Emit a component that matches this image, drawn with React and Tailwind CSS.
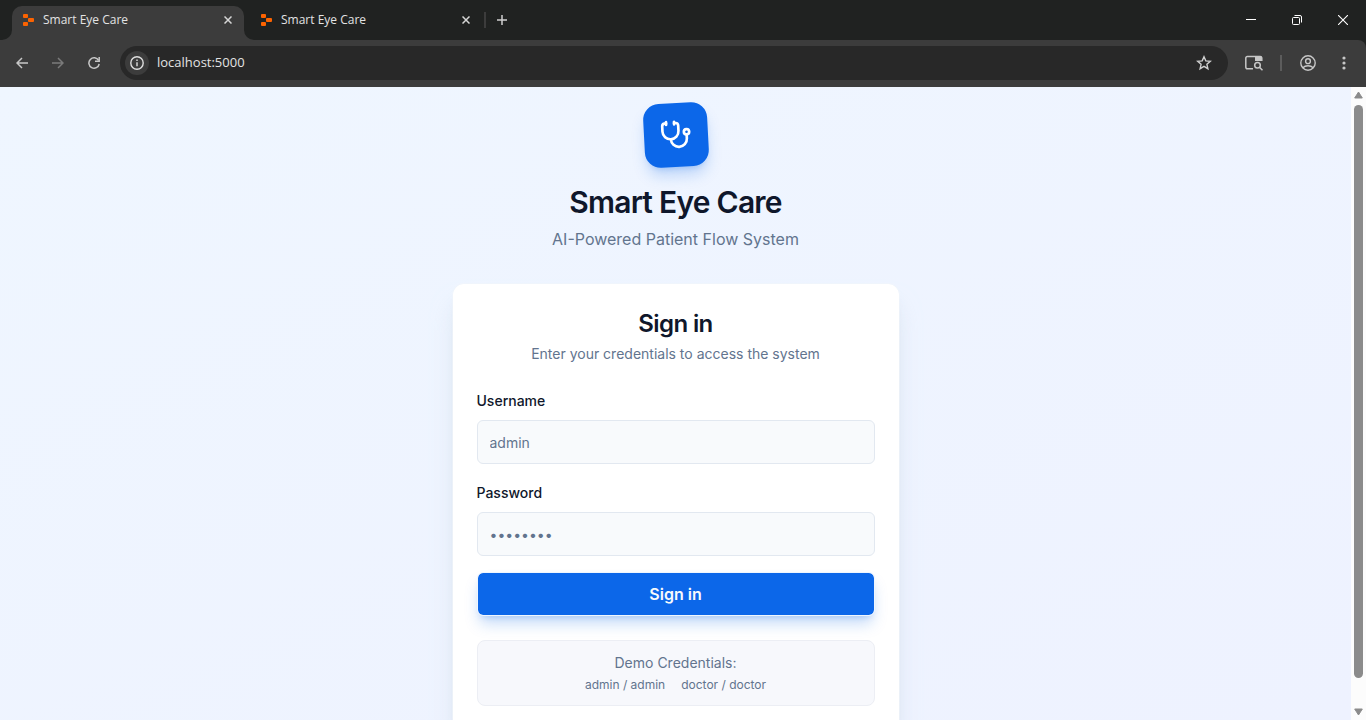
import { useState } from 'react'
import { Stethoscope } from 'lucide-react'
import clsx from 'clsx'

const TABS = [
  { id: 'login', title: 'Smart Eye Care' },
  { id: 'second', title: 'Smart Eye Care' },
]

const DEMO_ACCOUNTS = ['admin / admin', 'doctor / doctor']

const LABEL_CLASS = 'mb-[6px] block text-sm leading-[26px] font-medium text-slate-900'

const INPUT_CLASS =
  'h-11 w-full rounded-md border border-slate-200 bg-slate-50 px-3 text-sm text-slate-900 placeholder:text-slate-500 focus:outline-none'

const TOOL_BUTTON = 'flex h-9 w-9 shrink-0 items-center justify-center text-[#c7c7c7]'

function Favicon() {
  return (
    <svg viewBox="0 0 12 12" className="h-3 w-3 shrink-0" fill="#fc6301">
      <rect x="0" y="0" width="5" height="4" rx="1" />
      <rect x="5" y="4" width="6" height="4" rx="1" />
      <rect x="0" y="8" width="5" height="4" rx="1" />
    </svg>
  )
}

function CloseIcon() {
  return (
    <svg viewBox="0 0 8 8" className="h-2 w-2" fill="none" stroke="#d6d6d6" strokeWidth="1.5">
      <path d="M.5.5l7 7M7.5.5l-7 7" />
    </svg>
  )
}

function BrowserTab({ title, active, onSelect }) {
  return (
    <div
      className={clsx(
        'relative flex h-[34px] w-[232px] items-center rounded-t-[10px] pr-2 pb-[6px] pl-[11px]',
        active && 'bg-[#3c3c3c]',
      )}
    >
      {active && (
        <>
          <svg viewBox="0 0 10 10" className="absolute bottom-0 -left-[10px] h-[10px] w-[10px]" fill="#3c3c3c">
            <path d="M10 0v10H0A10 10 0 0 0 10 0z" />
          </svg>
          <svg viewBox="0 0 10 10" className="absolute -right-[10px] bottom-0 h-[10px] w-[10px]" fill="#3c3c3c">
            <path d="M0 0v10h10A10 10 0 0 1 0 0z" />
          </svg>
        </>
      )}
      <button
        type="button"
        onClick={onSelect}
        className="flex flex-1 items-center gap-2 text-left text-xs text-[#e3e3e3]"
      >
        <Favicon />
        {title}
      </button>
      <button type="button" aria-label="Close tab" className="flex h-4 w-4 items-center justify-center">
        <CloseIcon />
      </button>
    </div>
  )
}

function TabStrip() {
  const [current, setCurrent] = useState('login')

  return (
    <div className="flex h-10 items-end bg-[#202221] pl-3">
      <div className="flex gap-[6px]">
        {TABS.map((tab) => (
          <BrowserTab
            key={tab.id}
            title={tab.title}
            active={tab.id === current}
            onSelect={() => setCurrent(tab.id)}
          />
        ))}
      </div>
      <div className="flex h-10 items-center pl-[2px]">
        <span className="h-4 w-[2px] bg-[#3c3c3c]" />
        <button type="button" aria-label="New tab" className="ml-1 flex h-6 w-6 items-center justify-center">
          <svg viewBox="0 0 10 10" className="h-[10px] w-[10px]" stroke="#cfcfcf" strokeWidth="1.5">
            <path d="M5 0v10M0 5h10" />
          </svg>
        </button>
      </div>
      <div className="ml-auto flex h-10">
        <button type="button" aria-label="Minimize" className="flex w-[46px] items-center justify-center">
          <svg viewBox="0 0 10 10" className="h-[10px] w-[10px]" stroke="#fff">
            <path d="M0 4.5h10" />
          </svg>
        </button>
        <button type="button" aria-label="Restore" className="flex w-[46px] items-center justify-center">
          <svg viewBox="0 0 10 10" className="h-[10px] w-[10px]" fill="none" stroke="#fff">
            <rect x=".5" y="2.5" width="7" height="7" rx="1" />
            <path d="M2.5.5H8A1.5 1.5 0 0 1 9.5 2v5.5" />
          </svg>
        </button>
        <button type="button" aria-label="Close" className="flex w-[46px] items-center justify-center">
          <svg viewBox="0 0 10 10" className="h-[10px] w-[10px]" stroke="#fff" strokeWidth="1.1">
            <path d="M0 0l10 10M10 0L0 10" />
          </svg>
        </button>
      </div>
    </div>
  )
}

function Toolbar() {
  return (
    <div className="bg-[#202221]">
      <div className="flex h-[47px] items-center rounded-tr-lg bg-[#3c3c3c] px-1 pb-px">
        <button type="button" aria-label="Back" className={TOOL_BUTTON}>
          <svg viewBox="0 0 12 12" className="h-3 w-3" fill="none" stroke="currentColor" strokeWidth="1.5">
            <path d="M12 6H1M6 1L1 6l5 5" />
          </svg>
        </button>
        <button type="button" aria-label="Forward" className={clsx(TOOL_BUTTON, 'opacity-45')}>
          <svg viewBox="0 0 12 12" className="h-3 w-3" fill="none" stroke="currentColor" strokeWidth="1.5">
            <path d="M0 6h11M6 1l5 5-5 5" />
          </svg>
        </button>
        <button type="button" aria-label="Reload" className={TOOL_BUTTON}>
          <svg viewBox="0 0 12 12" className="h-3 w-3" fill="none" stroke="currentColor" strokeWidth="1.5">
            <path d="M10.6 3.4A5.2 5.2 0 1 0 11.2 7" />
            <path d="M11.2 0v4.3H7" />
          </svg>
        </button>

        <div className="ml-2 flex h-[34px] flex-1 items-center rounded-full bg-[#282828] pr-3 pl-[5px]">
          <button
            type="button"
            aria-label="Site information"
            className="flex h-6 w-6 items-center justify-center rounded-full bg-[#3c3c3c] text-[#dedede]"
          >
            <svg viewBox="0 0 14 14" className="h-[14px] w-[14px]" fill="none" stroke="currentColor" strokeWidth="1.4">
              <circle cx="7" cy="7" r="6.2" />
              <path d="M7 6.2v4M7 3.6v1.5" />
            </svg>
          </button>
          <input
            aria-label="Address"
            defaultValue="localhost:5000"
            className="ml-2 flex-1 bg-transparent text-[13px] text-[#e3e3e3] focus:outline-none"
          />
          <button type="button" aria-label="Bookmark" className="flex h-6 w-6 items-center justify-center text-[#d0d0d0]">
            <svg viewBox="0 0 16 16" className="h-4 w-4" fill="none" stroke="currentColor" strokeWidth="1.4">
              <path d="M8 1.8l1.8 4.1 4.5.4-3.4 3 1 4.4L8 11.4l-3.9 2.3 1-4.4-3.4-3 4.5-.4z" />
            </svg>
          </button>
        </div>

        <button type="button" aria-label="Search side panel" className={clsx(TOOL_BUTTON, 'ml-2')}>
          <svg viewBox="0 0 18 16" className="h-4 w-[18px]" fill="none" stroke="currentColor" strokeWidth="1.5">
            <path d="M8 13.8H2.3A1.5 1.5 0 0 1 .8 12.3V3a1.5 1.5 0 0 1 1.5-1.5h13A1.5 1.5 0 0 1 16.8 3v3" />
            <path d="M10 1.5h6.8V6H10z" fill="currentColor" stroke="none" />
            <circle cx="12.5" cy="10.3" r="2.8" />
            <path d="M14.5 12.3l3 3" />
          </svg>
        </button>
        <div className="flex w-[18px] justify-center">
          <span className="h-4 w-[2px] bg-[#5c5c5c]" />
        </div>
        <button type="button" aria-label="Profile" className={TOOL_BUTTON}>
          <svg viewBox="0 0 16 16" className="h-4 w-4" fill="none" stroke="currentColor" strokeWidth="1.4">
            <circle cx="8" cy="8" r="7.2" />
            <circle cx="8" cy="6.2" r="2.4" />
            <path d="M2.9 12.8C4.2 11.4 6 10.8 8 10.8s3.8.6 5.1 2" />
          </svg>
        </button>
        <button type="button" aria-label="Menu" className={TOOL_BUTTON}>
          <svg viewBox="0 0 4 14" className="h-[14px] w-1" fill="currentColor">
            <circle cx="2" cy="2" r="1.6" />
            <circle cx="2" cy="7" r="1.6" />
            <circle cx="2" cy="12" r="1.6" />
          </svg>
        </button>
      </div>
    </div>
  )
}

function Scrollbar() {
  return (
    <div aria-hidden="true" className="flex w-[15px] shrink-0 flex-col items-center bg-[#fcfcfc] py-1">
      <svg viewBox="0 0 9 8" className="h-2 w-[9px]" fill="#8b8b8b" stroke="#8b8b8b" strokeLinejoin="round">
        <path d="M4.5 1l3.8 6H.7z" />
      </svg>
      <div className="mt-[6px] w-[9px] flex-1 rounded-full bg-[#8b8b8b]" />
      <svg viewBox="0 0 9 8" className="mt-[30px] h-2 w-[9px]" fill="#8b8b8b" stroke="#8b8b8b" strokeLinejoin="round">
        <path d="M4.5 7L.7 1h7.6z" />
      </svg>
    </div>
  )
}

function LoginCard() {
  const [username, setUsername] = useState('')
  const [password, setPassword] = useState('')

  return (
    <div className="w-full max-w-md rounded-xl border border-slate-100/50 bg-white bg-clip-padding p-6 shadow-xl shadow-slate-300/60">
      <div className="text-center">
        <h2 className="text-2xl leading-8 font-semibold tracking-tight text-slate-900">Sign in</h2>
        <p className="mt-1 text-sm text-slate-500">Enter your credentials to access the system</p>
      </div>

      <form className="mt-6" onSubmit={(e) => e.preventDefault()}>
        <div className="space-y-4">
          <div>
            <label htmlFor="username" className={LABEL_CLASS}>
              Username
            </label>
            <input
              id="username"
              placeholder="admin"
              value={username}
              onChange={(e) => setUsername(e.target.value)}
              className={INPUT_CLASS}
            />
          </div>
          <div>
            <label htmlFor="password" className={LABEL_CLASS}>
              Password
            </label>
            <input
              id="password"
              type="password"
              placeholder="••••••••"
              value={password}
              onChange={(e) => setPassword(e.target.value)}
              className={INPUT_CLASS}
            />
          </div>
        </div>
        <button
          type="submit"
          className="mt-4 h-11 w-full rounded-md border border-blue-50 bg-[#0c67e9] bg-clip-padding text-base font-semibold text-slate-50 shadow-lg shadow-[#0c67e9]/25"
        >
          Sign in
        </button>
      </form>

      <div className="mt-6 rounded-lg border border-[#eceef4] bg-[#f7f8fc] px-4 py-3 text-center text-slate-500">
        <p className="text-sm">Demo Credentials:</p>
        <div className="mt-1 flex justify-center gap-4 text-xs">
          {DEMO_ACCOUNTS.map((account) => (
            <span key={account}>{account}</span>
          ))}
        </div>
      </div>
    </div>
  )
}

export default function App() {
  return (
    <div className="flex h-screen flex-col overflow-hidden">
      <header className="shrink-0 font-['Open_Sans','Noto_Sans',sans-serif]">
        <TabStrip />
        <Toolbar />
      </header>

      <div className="flex min-h-0 flex-1">
        <main className="flex min-w-0 flex-1 flex-col items-center overflow-hidden bg-linear-to-br from-[#eff6ff] to-[#eef2ff] p-4 font-[Inter,sans-serif]">
          <div className="flex h-16 w-16 shrink-0 -rotate-3 items-center justify-center rounded-2xl bg-[#0c67e9] text-white shadow-lg shadow-[#0c67e9]/25">
            <Stethoscope className="h-8 w-8" />
          </div>
          <h1 className="mt-4 text-3xl leading-[38px] font-semibold tracking-tight text-slate-900">Smart Eye Care</h1>
          <p className="mt-[6px] mb-8 text-base text-slate-500">AI-Powered Patient Flow System</p>
          <LoginCard />
        </main>
        <Scrollbar />
      </div>
    </div>
  )
}
